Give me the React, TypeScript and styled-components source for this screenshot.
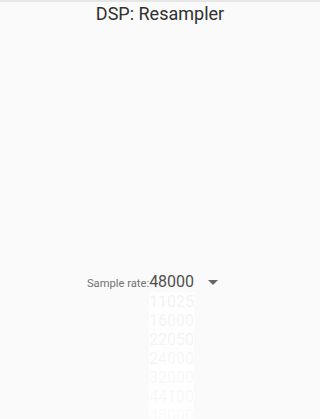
import React from "react";
import styled, { createGlobalStyle } from "styled-components";

const GlobalStyle = createGlobalStyle`
  html, body {
    margin: 0;
    padding: 0;
    background: #fafafa;
  }
  body {
    font-family: Roboto, "Noto Sans", sans-serif;
  }
`;

const Screen = styled.div`
  width: 320px;
  height: 419px;
  overflow: hidden;
  display: flex;
  flex-direction: column;
  align-items: center;
  border-top: 2px solid #e6e6e6;
  box-sizing: border-box;
`;

const Title = styled.h1`
  margin: 0;
  font-size: 18px;
  font-weight: 400;
  line-height: 24px;
  color: #303030;
`;

const Spacer = styled.div`
  height: 246px;
  flex-shrink: 0;
`;

const Field = styled.div`
  display: grid;
  grid-template-columns: auto auto auto;
  align-items: baseline;
  margin-right: 15px;
`;

const Label = styled.span`
  font-size: 11.2px;
  color: #727272;
`;

const Value = styled.span`
  font-size: 16px;
  line-height: 20px;
  color: #4e4e4e;
`;

const Caret = styled.svg`
  margin-left: 14px;
  width: 10px;
  height: 5px;
  align-self: center;
`;

const Options = styled.div`
  grid-column: 2;
  display: flex;
  flex-direction: column;
  align-items: flex-end;
  background: #fefefe;
`;

const Option = styled.div<{ $fade: number }>`
  font-size: 16px;
  line-height: 19px;
  color: rgba(180, 180, 180, ${(p) => p.$fade});
`;

const rates = [11025, 16000, 22050, 24000, 32000, 44100, 48000];

export default function App() {
  return (
    <>
      <GlobalStyle />
      <Screen>
        <Title>DSP: Resampler</Title>
        <Spacer />
        <Field>
          <Label>Sample rate:</Label>
          <Value>48000</Value>
          <Caret viewBox="0 0 10 5">
            <path d="M0 0 L10 0 L5 5 Z" fill="#666" />
          </Caret>
          <Options>
            {rates.map((r, i) => (
              <Option key={r} $fade={0.17 - i * 0.015}>
                {r}
              </Option>
            ))}
          </Options>
        </Field>
      </Screen>
    </>
  );
}
